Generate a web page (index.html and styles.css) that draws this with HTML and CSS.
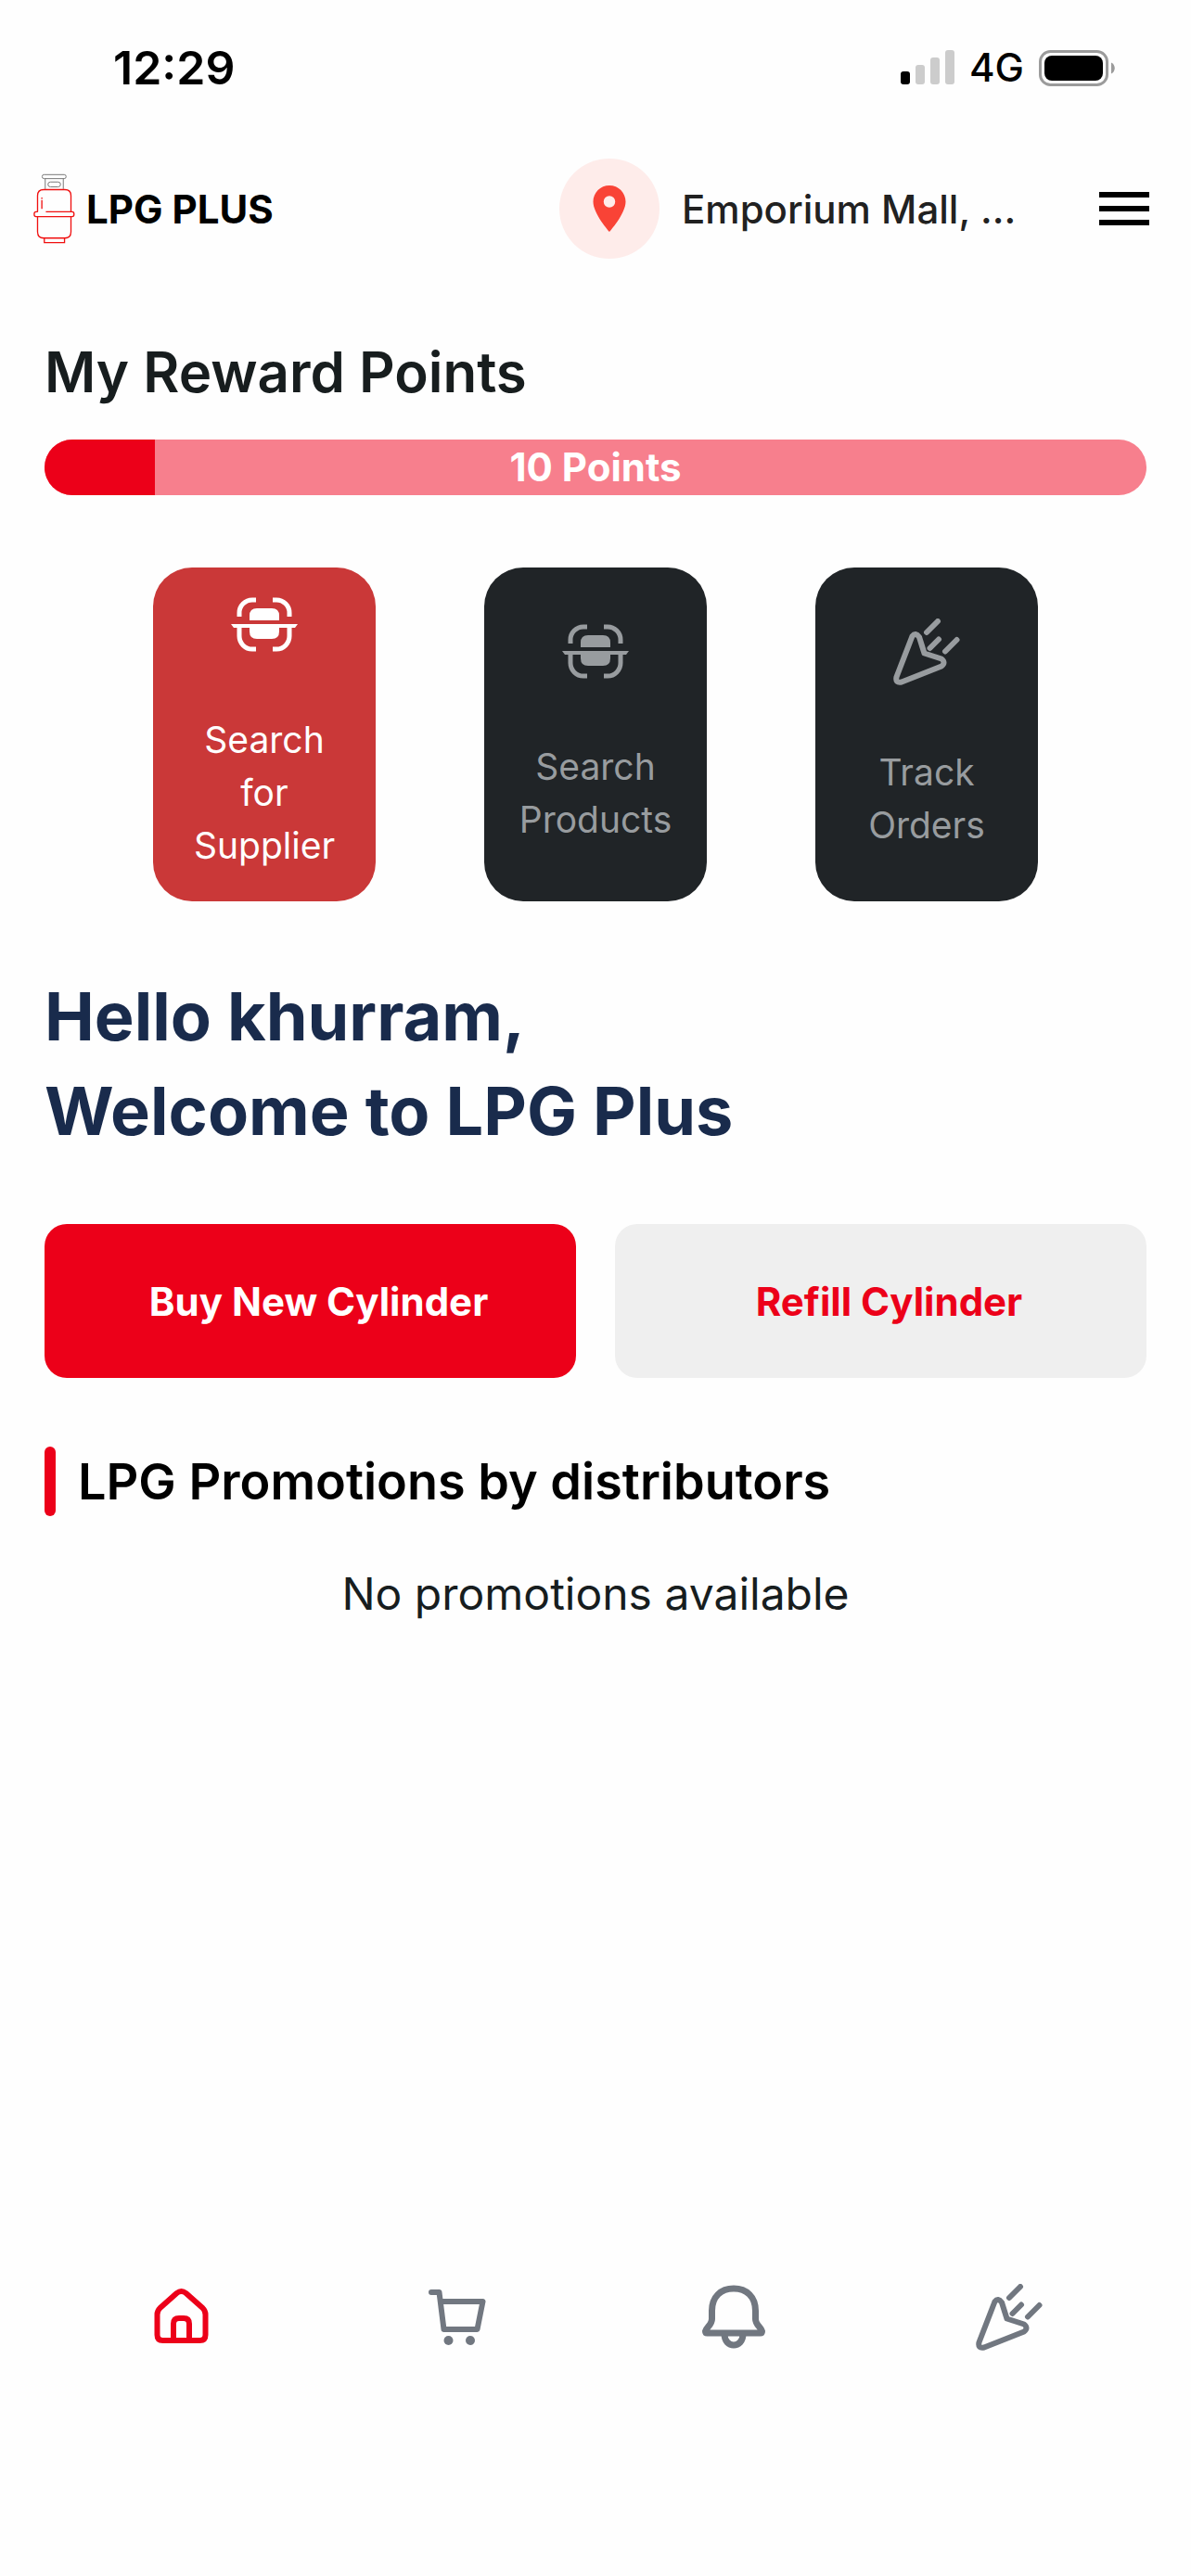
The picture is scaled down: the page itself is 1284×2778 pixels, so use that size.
FILE: index.html
```html
<!DOCTYPE html>
<html lang="en">
  <head>
    <meta charset="UTF-8" />
    <meta name="viewport" content="width=device-width, initial-scale=1.0" />
    <title>LPG Plus</title>
    <link rel="stylesheet" href="styles.css">
  </head>
  <body>
    <div class="status-bar">
      <span class="time">12:29</span>
      <div class="status-icons">
        <svg class="signal" viewBox="0 0 58 38" aria-hidden="true">
          <rect x="0" y="23" width="10" height="14" rx="3" fill="#000" />
          <rect x="16" y="16" width="10" height="21" rx="3" fill="#ccc" />
          <rect x="32" y="8" width="10" height="29" rx="3" fill="#ccc" />
          <rect x="48" y="0" width="10" height="37" rx="3" fill="#ccc" />
        </svg>
        <span class="network">4G</span>
        <svg class="battery" viewBox="0 0 82 39" aria-hidden="true">
          <rect x="1.5" y="1.5" width="72" height="36" rx="11" fill="none" stroke="#9b9b9b" stroke-width="3" />
          <rect x="6" y="6" width="63" height="27" rx="8" fill="#000" />
          <path d="M78 13.5c5 2 5 10 0 12z" fill="#9b9b9b" />
        </svg>
      </div>
    </div>

    <header class="header">
      <a class="logo" href="#">
        <svg class="logo-icon" viewBox="48 50 135 230" fill="none" stroke="#f01010" stroke-width="4" aria-hidden="true">
          <g stroke="#777" stroke-width="3">
            <rect x="76" y="54" width="78" height="13" rx="6" />
            <path d="M86 67v34M145 67v34" />
            <rect x="95" y="78" width="41" height="16" rx="8" />
          </g>
          <path d="M61 175v-52q0-20 20-20h69q20 0 20 20v52" />
          <path d="M88 175h86q6 0 6 8t-6 8H56q-6 0-6-8t6-8h6" />
          <path d="M61 191v50q0 20 20 20h69q20 0 20-20v-50" />
          <path d="M83 261v15h66v-15M75 137v29M75 129v4" />
        </svg>
        <span>LPG PLUS</span>
      </a>
      <button class="location" type="button">
        <span class="location-icon">
          <svg viewBox="0 0 24 24" aria-hidden="true">
            <path fill="#f94336" d="M12 2C8.13 2 5 5.13 5 9c0 5.25 7 13 7 13s7-7.75 7-13c0-3.87-3.13-7-7-7zm0 9.5a2.5 2.5 0 0 1 0-5 2.5 2.5 0 0 1 0 5z" />
          </svg>
        </span>
        <span class="location-text">Emporium Mall, ...</span>
      </button>
      <button class="menu" type="button" aria-label="Menu">
        <svg viewBox="0 0 24 24" aria-hidden="true">
          <path d="M3 18h18v-2H3v2zm0-5h18v-2H3v2zm0-7v2h18V6H3z" />
        </svg>
      </button>
    </header>

    <main>
      <h2 class="rewards-title">My Reward Points</h2>
      <div class="points" role="progressbar" aria-label="Reward points" aria-valuenow="10" aria-valuemin="0" aria-valuemax="100">
        <div class="points-fill" style="width: 10%"></div>
        <span class="points-label">10 Points</span>
      </div>

      <div class="cards">
        <button class="card active" type="button">
          <svg class="scan-icon" viewBox="0 0 72 60" aria-hidden="true">
            <g fill="none" stroke="currentColor" stroke-width="5">
              <path d="M27 3h-4a14 14 0 0 0-14 14v4M45 3h4a14 14 0 0 1 14 14v4" />
              <path d="M9 32v10a14 14 0 0 0 14 14h4M63 32v10a14 14 0 0 1-14 14h-4" />
            </g>
            <path fill="currentColor" d="M0 29h72l-3 4H3zM20 25v-5q0-8 8-8h16q8 0 8 8v5zM20 32h32v5q0 8-8 8H28q-8 0-8-8z" />
          </svg>
          <span>Search for Supplier</span>
        </button>
        <button class="card" type="button">
          <svg class="scan-icon" viewBox="0 0 72 60" aria-hidden="true">
            <g fill="none" stroke="currentColor" stroke-width="5">
              <path d="M27 3h-4a14 14 0 0 0-14 14v4M45 3h4a14 14 0 0 1 14 14v4" />
              <path d="M9 32v10a14 14 0 0 0 14 14h4M63 32v10a14 14 0 0 1-14 14h-4" />
            </g>
            <path fill="currentColor" d="M0 29h72l-3 4H3zM20 25v-5q0-8 8-8h16q8 0 8 8v5zM20 32h32v5q0 8-8 8H28q-8 0-8-8z" />
          </svg>
          <span>Search Products</span>
        </button>
        <button class="card" type="button">
          <svg class="party-icon" viewBox="0 0 72 72" aria-hidden="true">
            <path d="M20.5 19L3.5 63Q2 70 9 68.5L52 51.5Q57 47.5 52 43.5L33.5 37.5L28 20Q24 14.5 20.5 19zM36 15L48 3M39.5 32L49 22.5M56 35.5L68.5 23" />
          </svg>
          <span>Track Orders</span>
        </button>
      </div>

      <h1 class="greeting">Hello khurram,<br>Welcome to LPG Plus</h1>

      <div class="actions">
        <button class="buy-btn" type="button">Buy New Cylinder</button>
        <button class="refill-btn" type="button">Refill Cylinder</button>
      </div>

      <h2 class="promo-title">LPG Promotions by distributors</h2>
      <p class="promo-empty">No promotions available</p>
    </main>

    <nav class="bottom-nav">
      <a class="active" href="#" aria-label="Home">
        <svg viewBox="0 0 72 72" aria-hidden="true">
          <path d="M8.500 33q0-4 3-7L29.500 10q5-4 10 0l18 16q3 3 3 7v22q0 6-6 6h-40q-6 0-6-6zM26 61V43q0-6 6-6h5q6 0 6 6v18" />
        </svg>
      </a>
      <a href="#" aria-label="Cart">
        <svg viewBox="0 0 72 72" aria-hidden="true">
          <path d="M7 9h8.500L20.500 49h36l6-30H17" />
          <circle class="wheel" cx="25.500" cy="61" r="5" />
          <circle class="wheel" cx="49" cy="61" r="5" />
        </svg>
      </a>
      <a href="#" aria-label="Notifications">
        <svg class="bell" viewBox="0 0 72 72" aria-hidden="true">
          <path d="M12.500 29C12.500 14 22 5 36 5s23.500 9 23.500 24v9c0 6 6 9 7 13q0 2-2 2H7.500q-2 0-2-2c1-4 7-7 7-13zM26 54c0 16 20 16 20 0" />
        </svg>
      </a>
      <a href="#" aria-label="Orders">
        <svg viewBox="0 0 72 72" aria-hidden="true">
          <path d="M20.5 19L3.5 63Q2 70 9 68.5L52 51.5Q57 47.5 52 43.5L33.5 37.5L28 20Q24 14.5 20.5 19zM36 15L48 3M39.5 32L49 22.5M56 35.5L68.5 23" />
        </svg>
      </a>
    </nav>
  </body>
</html>
```

FILE: styles.css
```css
/* General Styles */
* {
  box-sizing: border-box;
}

body {
  font-family: Inter, "Liberation Sans", sans-serif;
  margin: 0;
  min-height: 100vh;
  display: flex;
  flex-direction: column;
  background-color: #fefefe;
  color: #171d1e;
}

button {
  font-family: inherit;
  border: none;
  padding: 0;
  background: none;
  cursor: pointer;
}

a {
  text-decoration: none;
}

svg {
  display: block;
  flex-shrink: 0;
}

h1,
h2,
p {
  margin: 0;
}

/* Status Bar */
.status-bar {
  display: flex;
  justify-content: space-between;
  align-items: center;
  padding: 43px 82px 38px 122px;
  color: #000;
}

.time {
  font-size: 50px;
  line-height: 60px;
  font-weight: 600;
}

.status-icons {
  display: flex;
  align-items: center;
  gap: 16px;
}

.signal {
  width: 58px;
  height: 38px;
}

.network {
  font-size: 42px;
  line-height: 60px;
  font-weight: 500;
}

.battery {
  width: 82px;
  height: 39px;
}

/* Header */
.header {
  display: flex;
  align-items: center;
  padding: 30px 36px 0;
}

.logo {
  display: flex;
  align-items: center;
  gap: 12px;
  font-size: 42px;
  font-weight: 700;
  color: #000;
}

.logo-icon {
  width: 45px;
  height: 76px;
}

.location {
  display: flex;
  align-items: center;
  gap: 24px;
  margin-left: auto;
  margin-right: 48px;
  text-align: left;
}

.location-icon {
  display: flex;
  align-items: center;
  justify-content: center;
  width: 108px;
  height: 108px;
  border-radius: 50%;
  background-color: #feecea;
}

.location-icon svg {
  width: 60px;
  height: 60px;
}

.location-text {
  width: 393px;
  font-size: 42px;
  font-weight: 500;
  color: #212121;
}

.menu svg {
  width: 72px;
  height: 72px;
}

/* Reward Points */
main {
  padding: 86px 48px 0;
}

.rewards-title {
  font-size: 60px;
  line-height: 72px;
  font-weight: 600;
}

.points {
  display: grid;
  height: 60px;
  margin-top: 37px;
  border-radius: 30px;
  overflow: hidden;
  background-color: #f77f8d;
}

.points-fill,
.points-label {
  grid-area: 1 / 1;
}

.points-fill {
  background-color: #ec0019;
}

.points-label {
  font-size: 42px;
  line-height: 60px;
  font-weight: 700;
  text-align: center;
  color: #fff;
}

/* Cards */
.cards {
  display: flex;
  justify-content: space-evenly;
  margin-top: 78px;
}

.card {
  display: flex;
  flex-direction: column;
  align-items: center;
  justify-content: center;
  gap: 65px;
  width: 240px;
  height: 360px;
  padding: 0 30px;
  border-radius: 42px;
  background-color: #202427;
  color: #989c9f;
  font-size: 39px;
  line-height: 57px;
}

.card.active {
  background-color: #ca3838;
  color: #fff;
}

.scan-icon {
  width: 72px;
  height: 60px;
}

.party-icon {
  width: 72px;
  height: 72px;
  fill: none;
  stroke: currentColor;
  stroke-width: 6;
  stroke-linecap: round;
  stroke-linejoin: round;
}

/* Greeting */
.greeting {
  margin-top: 73px;
  font-size: 72px;
  line-height: 102px;
  font-weight: 700;
  color: #192b4c;
}

/* Action Buttons */
.actions {
  display: grid;
  grid-template-columns: 1fr 1fr;
  gap: 42px;
  margin-top: 71px;
}

.buy-btn,
.refill-btn {
  height: 166px;
  padding-left: 18px;
  border-radius: 24px;
  font-size: 42px;
  font-weight: 700;
}

.buy-btn {
  background-color: #ec0019;
  color: #fff;
}

.refill-btn {
  background-color: #efefef;
  color: #ec0019;
}

/* Promotions */
.promo-title {
  display: flex;
  align-items: center;
  gap: 24px;
  margin-top: 74px;
  font-size: 54px;
  line-height: 75px;
  font-weight: 600;
  color: #000;
}

.promo-title::before {
  content: "";
  width: 12px;
  height: 75px;
  border-radius: 6px;
  background-color: #ec0019;
}

.promo-empty {
  margin-top: 54px;
  font-size: 48px;
  line-height: 60px;
  text-align: center;
}

/* Bottom Navigation */
.bottom-nav {
  display: grid;
  grid-template-columns: repeat(4, 1fr);
  justify-items: center;
  margin-top: auto;
  padding: 48px 48px 243px;
}

.bottom-nav a {
  color: #717780;
}

.bottom-nav a.active {
  color: #ec0019;
}

.bottom-nav svg {
  width: 72px;
  height: 72px;
  fill: none;
  stroke: currentColor;
  stroke-width: 6;
  stroke-linecap: round;
  stroke-linejoin: round;
}

.bottom-nav .bell {
  stroke-width: 7;
}

.bottom-nav .wheel {
  fill: currentColor;
  stroke: none;
}
```
